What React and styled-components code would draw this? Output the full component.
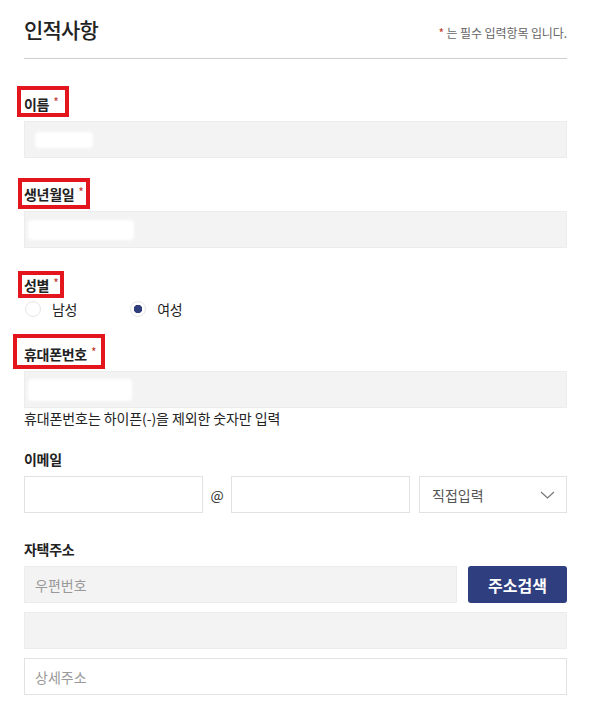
import styled, { createGlobalStyle } from "styled-components";

const GlobalStyle = createGlobalStyle`
  body {
    margin: 0;
    background: #fff;
    font-family: "Noto Sans CJK KR", "Noto Sans", sans-serif;
    color: #222;
  }
`;

export default function App() {
  return (
    <>
      <GlobalStyle />
      <Page>
        <Header>
          <Title>인적사항</Title>
          <Note>
            <Star>*</Star> 는 필수 입력항목 입니다.
          </Note>
        </Header>

        <Field $mt={35}>
          <Label $box="-8px -11px -3px -7px">
            이름<Star>*</Star>
          </Label>
          <Input $filled>
            <Masked $w={58} $h={16} $x={10} />
          </Input>
        </Field>

        <Field $mt={26}>
          <Label $box="-6px -6px -5px -6px">
            생년월일<Star>*</Star>
          </Label>
          <Input $filled>
            <Masked $w={106} $h={20} $x={3} />
          </Input>
        </Field>

        <Field $mt={27}>
          <Label $box="-4px -6px -3px -6px">
            성별<Star>*</Star>
          </Label>
          <RadioRow>
            <RadioItem>
              <Radio />
              남성
            </RadioItem>
            <RadioItem>
              <Radio $checked />
              여성
            </RadioItem>
          </RadioRow>
        </Field>

        <Field $mt={25}>
          <Label $box="-10px -9px -5px -11px">
            휴대폰번호<Star>*</Star>
          </Label>
          <Input $filled>
            <Masked $w={104} $h={22} $x={3} />
          </Input>
          <Help>휴대폰번호는 하이픈(-)을 제외한 숫자만 입력</Help>
        </Field>

        <Field $mt={21}>
          <Label>이메일</Label>
          <EmailRow>
            <Input $w={179} />
            <At>@</At>
            <Input $w={179} />
            <Select>
              직접입력
              <svg width="15" height="8" viewBox="0 0 15 8">
                <path d="M1 1l6.5 6 6.5-6" fill="none" stroke="#777" strokeWidth="1.2" />
              </svg>
            </Select>
          </EmailRow>
        </Field>

        <Field $mt={26}>
          <Label>자택주소</Label>
          <AddressStack>
            <AddressRow>
              <Input $filled>
                <Placeholder>우편번호</Placeholder>
              </Input>
              <SearchButton>주소검색</SearchButton>
            </AddressRow>
            <Input $filled />
            <Input>
              <Placeholder>상세주소</Placeholder>
            </Input>
          </AddressStack>
        </Field>
      </Page>
    </>
  );
}

const Page = styled.div`
  width: 543px;
  padding: 0 25px 0 24px;
`;

const Header = styled.div`
  display: flex;
  justify-content: space-between;
  align-items: baseline;
  padding: 14px 0;
  border-bottom: 1px solid #cfcfcf;
`;

const Title = styled.h1`
  margin: 0;
  font-size: 21px;
  font-weight: 500;
  line-height: 30px;
  letter-spacing: -0.8px;
  color: #222;
`;

const Note = styled.span`
  font-size: 12px;
  line-height: 16px;
  letter-spacing: -0.1px;
  color: #666;
`;

const Star = styled.span`
  color: #c0392b;
  font-size: 12px;
  font-weight: 400;
  margin-left: 4px;
  vertical-align: top;
  line-height: 16px;

  ${Note} > & {
    margin-left: 0;
    vertical-align: baseline;
  }
`;

const Field = styled.div`
  display: flex;
  flex-direction: column;
  margin-top: ${(p) => p.$mt}px;
`;

const Label = styled.label`
  position: relative;
  align-self: flex-start;
  font-size: 14px;
  font-weight: 700;
  line-height: 20px;
  letter-spacing: -0.3px;
  color: #222;
  margin-bottom: 7px;

  &::before {
    content: ${(p) => (p.$box ? '""' : "none")};
    position: absolute;
    inset: ${(p) => p.$box || "0"};
    border: 4px solid #e3161e;
  }
`;

const Input = styled.div`
  position: relative;
  box-sizing: border-box;
  display: flex;
  align-items: center;
  height: 37px;
  width: ${(p) => (p.$w ? `${p.$w}px` : "auto")};
  flex: ${(p) => (p.$w ? "none" : "1 1 auto")};
  padding: 0 10px;
  background: ${(p) => (p.$filled ? "#f3f3f3" : "#fff")};
  border: 1px solid ${(p) => (p.$filled ? "#ececec" : "#e2e2e2")};
`;

const Masked = styled.span`
  position: absolute;
  left: ${(p) => p.$x}px;
  top: 50%;
  width: ${(p) => p.$w}px;
  height: ${(p) => p.$h}px;
  margin-top: -${(p) => p.$h / 2}px;
  background: #fff;
  border-radius: 4px;
  filter: blur(1.5px);
`;

const Placeholder = styled.span`
  font-size: 14px;
  color: #999;
  letter-spacing: 0;
`;

const RadioRow = styled.div`
  display: flex;
  gap: 53px;
  margin-top: -3px;
  padding-left: 1px;
`;

const RadioItem = styled.span`
  display: flex;
  align-items: center;
  gap: 11px;
  font-size: 14px;
  line-height: 20px;
  letter-spacing: -0.3px;
  color: #222;
`;

const Radio = styled.span`
  box-sizing: border-box;
  width: 16px;
  height: 16px;
  border-radius: 50%;
  border: 1px solid #e6e6e6;
  background: ${(p) =>
    p.$checked ? "radial-gradient(circle, #2f3d7c 0 4px, #fff 4.5px)" : "#fff"};
`;

const Help = styled.p`
  margin: 0;
  font-size: 14px;
  line-height: 20px;
  letter-spacing: -0.1px;
  color: #222;
`;

const EmailRow = styled.div`
  display: flex;
  align-items: center;
`;

const At = styled.span`
  width: 28px;
  text-align: center;
  font-size: 14px;
  color: #333;
`;

const Select = styled.div`
  box-sizing: border-box;
  flex: 1;
  margin-left: 9px;
  height: 37px;
  display: flex;
  align-items: center;
  justify-content: space-between;
  padding: 0 11px 0 12px;
  border: 1px solid #e2e2e2;
  font-size: 14px;
  letter-spacing: 0;
  color: #555;
`;

const AddressStack = styled.div`
  display: flex;
  flex-direction: column;
  gap: 9px;
`;

const AddressRow = styled.div`
  display: flex;
  gap: 11px;
`;

const SearchButton = styled.button`
  width: 99px;
  height: 37px;
  border: none;
  border-radius: 3px;
  background: #2f3e7e;
  color: #fff;
  font-family: inherit;
  font-size: 16px;
  font-weight: 700;
  letter-spacing: 0;
`;
